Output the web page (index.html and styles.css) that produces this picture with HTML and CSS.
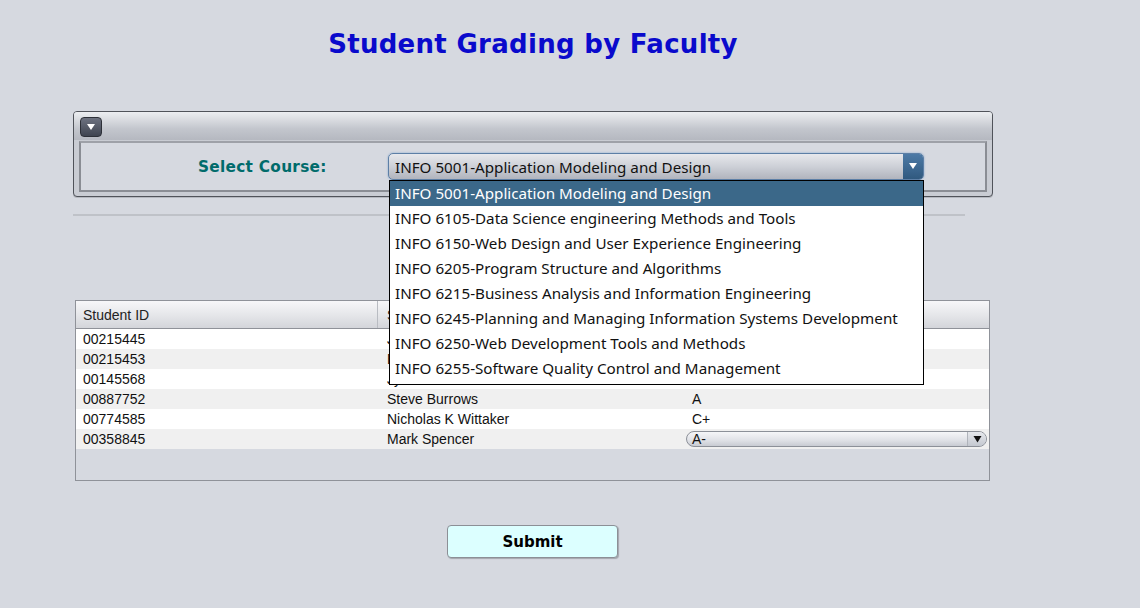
FILE: index.html
```html
<!DOCTYPE html>
<html>
<head>
<meta charset="utf-8">
<link rel="stylesheet" href="styles.css">
<title>Student Grading by Faculty</title>
</head>
<body>
<div class="page">
  <h1 class="title">Student Grading by Faculty</h1>

  <div class="panel">
    <div class="panel-bar">
      <span class="collapse-btn"><svg width="10" height="8" viewBox="0 0 10 8"><path d="M1 1h8L5 7z" fill="#fff"/></svg></span>
    </div>
    <div class="panel-body">
      <label class="course-label">Select Course:</label>
      <div class="combo">
        <span class="combo-text">INFO 5001-Application Modeling and Design</span>
        <span class="combo-arrow"><svg width="10" height="8" viewBox="0 0 10 8"><path d="M1 1h8L5 7z" fill="#fff"/></svg></span>
        <ul class="combo-list">
          <li class="selected">INFO 5001-Application Modeling and Design</li>
          <li>INFO 6105-Data Science engineering Methods and Tools</li>
          <li>INFO 6150-Web Design and User Experience Engineering</li>
          <li>INFO 6205-Program Structure and Algorithms</li>
          <li>INFO 6215-Business Analysis and Information Engineering</li>
          <li>INFO 6245-Planning and Managing Information Systems Development</li>
          <li>INFO 6250-Web Development Tools and Methods</li>
          <li>INFO 6255-Software Quality Control and Management</li>
        </ul>
      </div>
    </div>
  </div>

  <hr class="separator">

  <div class="table">
    <div class="thead">
      <div class="th c1">Student ID</div>
      <div class="th c2">Student Name</div>
      <div class="th c3">Grade</div>
    </div>
    <div class="row"><div class="c1">00215445</div><div class="c2">Jason Bourne</div><div class="c3">B+</div></div>
    <div class="row alt"><div class="c1">00215453</div><div class="c2">Emily Carter</div><div class="c3">A</div></div>
    <div class="row"><div class="c1">00145568</div><div class="c2">Jyoti Sharma</div><div class="c3">B</div></div>
    <div class="row alt"><div class="c1">00887752</div><div class="c2">Steve Burrows</div><div class="c3">A</div></div>
    <div class="row"><div class="c1">00774585</div><div class="c2">Nicholas K Wittaker</div><div class="c3">C+</div></div>
    <div class="row alt"><div class="c1">00358845</div><div class="c2">Mark Spencer</div>
      <div class="c3 edit"><div class="grade-combo"><span>A-</span><span class="gc-arrow"><svg width="9" height="8" viewBox="0 0 9 8"><path d="M0.5 1h8L4.5 7.5z" fill="#111"/></svg></span></div></div>
    </div>
  </div>

  <div class="actions">
    <button class="submit">Submit</button>
  </div>
</div>
</body>
</html>
```

FILE: styles.css
```css
html, body {
  margin: 0;
  padding: 0;
  background: #d6d9e0;
  height: 100%;
}
body {
  font-family: "DejaVu Sans", Verdana, sans-serif;
  color: #000;
}
.page {
  margin-left: 73px;
  width: 920px;
  display: flex;
  flex-direction: column;
}
.title {
  margin: 0;
  padding-top: 26px;
  height: 111px;
  box-sizing: border-box;
  text-align: center;
  font-size: 26px;
  line-height: 36px;
  font-weight: bold;
  color: #0a0acc;
  letter-spacing: 0.3px;
}
.panel {
  border: 1px solid #50535a;
  border-radius: 4px;
  height: 86px;
  box-sizing: border-box;
  background: #c9ccd3;
  display: flex;
  flex-direction: column;
  box-shadow: 0 1px 0 #b5b8bf;
}
.panel-bar {
  height: 28px;
  background: linear-gradient(#eceef1, #c3c6cd 60%, #b5b8c0);
  border-radius: 3px 3px 0 0;
  display: flex;
  align-items: center;
  padding-left: 6px;
  box-sizing: border-box;
}
.collapse-btn {
  width: 22px;
  height: 20px;
  border-radius: 4px;
  background: linear-gradient(#6d7280, #3f4450);
  border: 1px solid #2d3038;
  display: flex;
  align-items: center;
  justify-content: center;
  box-sizing: border-box;
  margin-top: 2px;
}
.panel-body {
  margin: 1px 5px 4px 5px;
  flex: 1;
  border: 2px solid #8a8d94;
  border-top-color: #9ea1a8;
  background: #d6d9e0;
  display: flex;
  align-items: center;
  padding-left: 117px;
  position: relative;
}
.course-label {
  width: 190px;
  font-weight: bold;
  font-size: 15.3px;
  color: #006b6b;
  letter-spacing: 0.3px;
  padding-top: 1px;
}
.combo {
  position: relative;
  width: 536px;
  height: 27px;
  box-sizing: border-box;
  border: 1px solid #5d7fa6;
  border-radius: 5px;
  background: linear-gradient(#e7e8ec, #cdd0d7 50%, #b1b4bd);
  box-shadow: 0 0 2px #7fa3cc;
  display: flex;
  align-items: center;
  margin-top: -1px;
}
.combo-text {
  flex: 1;
  padding-left: 6px;
  padding-top: 1px;
  font-family: "Noto Sans", "DejaVu Sans", sans-serif;
  font-size: 15.2px;
  color: #111;
}
.combo-arrow {
  width: 20px;
  height: 25px;
  background: linear-gradient(#4d7aa6, #30597f);
  border-radius: 0 4px 4px 0;
  display: flex;
  align-items: center;
  justify-content: center;
}
.combo-list {
  position: absolute;
  top: 26px;
  left: 0px;
  width: 535px;
  margin: 0;
  padding: 0 0 3px 0;
  list-style: none;
  background: #fff;
  border: 1px solid #000;
  z-index: 10;
  box-sizing: border-box;
}
.combo-list li {
  height: 25px;
  line-height: 25px;
  padding-left: 5px;
  font-family: "Noto Sans", "DejaVu Sans", sans-serif;
  font-size: 15.2px;
  color: #111;
  white-space: nowrap;
}
.combo-list li.selected {
  background: #3b6889;
  color: #fff;
}
.separator {
  margin: 17px 0 0 0;
  width: 892px;
  height: 0;
  border: 0;
  border-top: 2px solid #bfc2c8;
}
.table {
  margin: 84px 0 0 2px;
  width: 915px;
  height: 181px;
  box-sizing: border-box;
  border: 1px solid #8f9299;
  background: #d6d9e0;
  font-family: "Liberation Sans", Arial, sans-serif;
  font-size: 14px;
}
.thead {
  display: flex;
  height: 28px;
  background: linear-gradient(#f7f7f9, #e6e7ea 50%, #d3d5da);
  border-bottom: 1px solid #8f9299;
  box-sizing: border-box;
}
.th {
  display: flex;
  align-items: center;
  padding-left: 7px;
  color: #222;
  border-right: 1px solid #b9bcc2;
  box-sizing: border-box;
}
.th.c3 { border-right: 0; }
.row {
  display: flex;
  height: 20px;
  line-height: 21px;
  background: #fff;
  color: #111;
}
.row.alt { background: #f0f0f0; }
.c1 { width: 302px; padding-left: 7px; box-sizing: border-box; }
.c2 { width: 305px; padding-left: 9px; box-sizing: border-box; }
.c3 { flex: 1; padding-left: 9px; box-sizing: border-box; }
.c3.edit { padding: 2px 2px 2px 3px; }
.grade-combo {
  height: 16px;
  box-sizing: border-box;
  border: 1px solid #8c9098;
  border-radius: 8px;
  background: linear-gradient(#f5f6f8, #dfe1e6 60%, #c8cbd2);
  display: flex;
  align-items: center;
  line-height: 14px;
}
.grade-combo span:first-child {
  flex: 1;
  padding-left: 5px;
  font-size: 14px;
}
.gc-arrow {
  width: 18px;
  height: 14px;
  border-left: 1px solid #b0b4bb;
  border-radius: 0 7px 7px 0;
  background: linear-gradient(#e6e8ec, #c4c8d0);
  display: flex;
  align-items: center;
  justify-content: center;
}
.actions {
  display: flex;
  justify-content: center;
  margin-top: 44px;
  padding-right: 1px;
}
.submit {
  width: 171px;
  height: 33px;
  background: #dcffff;
  border: 1px solid #8c8f96;
  border-radius: 4px;
  box-shadow: 1px 1px 1px #a3a6ad;
  font-family: "DejaVu Sans", Verdana, sans-serif;
  font-weight: bold;
  font-size: 15px;
  color: #000;
  padding: 0;
}
```
